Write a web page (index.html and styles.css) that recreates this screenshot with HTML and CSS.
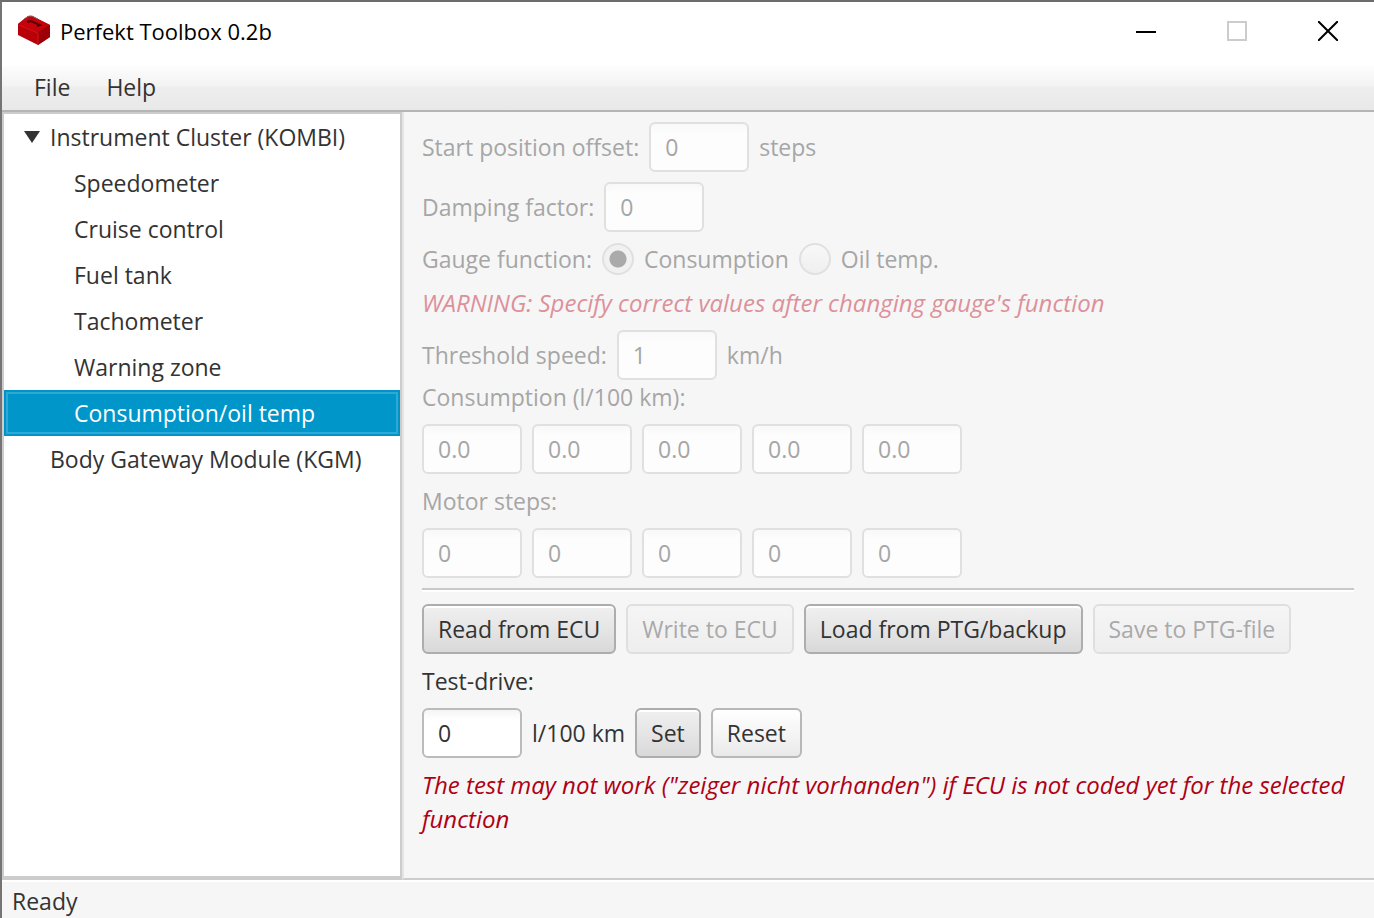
FILE: index.html
```html
<!DOCTYPE html>
<html lang="en">
<head>
<meta charset="utf-8">
<title>Perfekt Toolbox 0.2b</title>
<link rel="stylesheet" href="styles.css">
</head>
<body>
<div class="window">
  <header class="titlebar">
    <svg class="logo" viewBox="0 0 32 31" aria-hidden="true">
      <path fill="#b80008" d="M0 9 10 1h4l18 9v12l-12 8L0 20z"/>
      <path fill="#c4040c" d="M0 9 10 1h4l18 9-12 7z"/>
      <path fill="#9c0006" d="m20 17 12-7v12l-12 8z"/>
      <path fill="none" stroke="#e01018" d="m1 10 19 8v11"/>
      <path fill="none" stroke="#560004" stroke-width="2" d="m9 7 4-1 9 4-3 1"/>
      <path fill="none" stroke="#8e6b6b" d="m6 4 5-3h3l6 3"/>
    </svg>
    <h1 class="title">Perfekt Toolbox 0.2b</h1>
    <div class="controls">
      <button class="control" aria-label="Minimize"><svg viewBox="0 0 20 20"><path d="M0 11h20"/></svg></button>
      <button class="control" aria-label="Maximize" disabled><svg viewBox="0 0 20 20"><path d="M1 1h18v18H1z"/></svg></button>
      <button class="control" aria-label="Close"><svg viewBox="0 0 20 20"><path d="m0 0 20 20M20 0 0 20"/></svg></button>
    </div>
  </header>
  <nav class="menubar">
    <button class="menu">File</button>
    <button class="menu">Help</button>
  </nav>
  <div class="body">
    <ul class="tree" role="tree">
      <li class="node root" role="treeitem" aria-expanded="true"><svg class="arrow" viewBox="0 0 16 12" aria-hidden="true"><path d="M0 0h16L8 12z"/></svg>Instrument Cluster (KOMBI)</li>
      <li class="node leaf" role="treeitem">Speedometer</li>
      <li class="node leaf" role="treeitem">Cruise control</li>
      <li class="node leaf" role="treeitem">Fuel tank</li>
      <li class="node leaf" role="treeitem">Tachometer</li>
      <li class="node leaf" role="treeitem">Warning zone</li>
      <li class="node leaf selected" role="treeitem" aria-selected="true">Consumption/oil temp</li>
      <li class="node top" role="treeitem">Body Gateway Module (KGM)</li>
    </ul>
    <main class="panel">
      <div class="row dim"><label for="offset">Start position offset:</label><input class="field" id="offset" value="0" disabled><span>steps</span></div>
      <div class="row dim"><label for="damping">Damping factor:</label><input class="field" id="damping" value="0" disabled></div>
      <div class="row dim" role="radiogroup" aria-label="Gauge function">
        <span>Gauge function:</span>
        <label class="option"><input class="radio" type="radio" name="gauge" checked disabled>Consumption</label>
        <label class="option"><input class="radio" type="radio" name="gauge" disabled>Oil temp.</label>
      </div>
      <p class="note dim">WARNING: Specify correct values after changing gauge's function</p>
      <div class="group">
        <div class="row dim"><label for="threshold">Threshold speed:</label><input class="field" id="threshold" value="1" disabled><span>km/h</span></div>
        <p class="text dim" id="consumption">Consumption (l/100 km):</p>
      </div>
      <div class="row" role="group" aria-labelledby="consumption">
        <input class="field" value="0.0" aria-label="Consumption 1" disabled>
        <input class="field" value="0.0" aria-label="Consumption 2" disabled>
        <input class="field" value="0.0" aria-label="Consumption 3" disabled>
        <input class="field" value="0.0" aria-label="Consumption 4" disabled>
        <input class="field" value="0.0" aria-label="Consumption 5" disabled>
      </div>
      <p class="text dim" id="motor">Motor steps:</p>
      <div class="row" role="group" aria-labelledby="motor">
        <input class="field" value="0" aria-label="Motor steps 1" disabled>
        <input class="field" value="0" aria-label="Motor steps 2" disabled>
        <input class="field" value="0" aria-label="Motor steps 3" disabled>
        <input class="field" value="0" aria-label="Motor steps 4" disabled>
        <input class="field" value="0" aria-label="Motor steps 5" disabled>
      </div>
      <hr class="separator">
      <div class="row">
        <button class="button strong">Read from ECU</button>
        <button class="button" disabled>Write to ECU</button>
        <button class="button strong">Load from PTG/backup</button>
        <button class="button" disabled>Save to PTG-file</button>
      </div>
      <label class="text" for="test">Test-drive:</label>
      <div class="row">
        <input class="field" id="test" value="0"><span>l/100 km</span>
        <button class="button strong">Set</button>
        <button class="button">Reset</button>
      </div>
      <p class="note">The test may not work ("zeiger nicht vorhanden") if ECU is not coded yet for the selected function</p>
    </main>
  </div>
  <footer class="status">Ready</footer>
</div>
</body>
</html>
```
FILE: styles.css
```css
* { box-sizing: border-box; }
body {
  margin: 0;
  color: #333;
  font: 23px/34px "Open Sans", "Noto Sans", sans-serif;
}
p, h1, ul { margin: 0; padding: 0; }
button, input { font: inherit; color: inherit; }
.window {
  display: flex;
  flex-direction: column;
  min-height: 100vh;
  border-top: 2px solid #6d6b6d;
  border-left: 2px solid #757375;
  background: #f6f6f6;
}
.titlebar {
  display: flex;
  align-items: center;
  height: 64px;
  padding: 0 1px 7px 16px;
  background: #fff;
}
.logo { width: 32px; height: 31px; }
.title {
  margin-left: 10px;
  color: #000;
  font-size: 22px;
  font-weight: 400;
}
.controls { display: flex; margin-left: auto; }
.control {
  display: grid;
  place-items: center;
  width: 91px;
  height: 56px;
  padding: 0;
  border: 0;
  background: none;
}
.control svg {
  width: 20px;
  height: 20px;
  fill: none;
  stroke: #000;
  stroke-width: 2;
}
.control:disabled svg { stroke: #ccc; }
.menubar {
  display: flex;
  height: 46px;
  padding: 0 16px 2px;
  border-bottom: 2px solid #b5b5b5;
  background: linear-gradient(#fdfdfd, #f3f3f3 45%, #eee 48%, #e9e8e9);
}
.menu {
  padding: 0 20px 0 16px;
  border: 0;
  background: none;
}
.body { display: flex; flex: 1; }
.tree {
  flex: 0 0 400px;
  border: 2px solid #ccc;
  border-bottom-width: 4px;
  background: #fff;
  list-style: none;
}
.node {
  display: flex;
  align-items: center;
  height: 46px;
}
.root { padding-left: 20px; }
.top { padding-left: 46px; }
.leaf { padding-left: 70px; }
.arrow {
  width: 16px;
  height: 12px;
  margin-right: 10px;
  fill: #333;
}
.selected {
  border: 2px solid #0093ca;
  outline: 2px solid #30a8d4;
  outline-offset: -4px;
  padding-left: 68px;
  background: #0096c9;
  color: #fff;
}
.panel {
  display: flex;
  flex: 1;
  flex-direction: column;
  gap: 10px;
  min-width: 0;
  padding: 10px 20px 10px 18px;
  border-bottom: 2px solid #ccc;
  border-left: 2px solid #e4e4e4;
}
.row {
  display: flex;
  align-items: center;
  gap: 10px;
  white-space: nowrap;
}
.dim { color: #a6a6a6; }
.field {
  width: 100px;
  height: 50px;
  padding: 0 14px;
  border: 2px solid #bbb;
  border-radius: 6px;
  background: linear-gradient(#f5f5f5, #fff 10px);
}
.field:disabled {
  border-color: #e0e0e0;
  background: linear-gradient(#f8f8f8, #fdfdfd 10px);
  color: #a6a6a6;
}
.option { display: flex; align-items: center; gap: 10px; }
.radio {
  width: 32px;
  height: 32px;
  margin: 0;
  border: 2px solid #e0e0e0;
  border-radius: 50%;
  appearance: none;
  background: linear-gradient(#f8f8f8, #efefef);
}
.radio:checked {
  background: radial-gradient(circle, #aaa 8px, #f1f1f1 9px);
}
.note { color: #b00014; font-size: 24px; font-style: italic; }
.note.dim { color: #dc919a; }
.separator {
  width: 100%;
  height: 6px;
  margin: 0;
  border: 0;
  border-top: 2px solid #c8cac8;
  background: linear-gradient(#fff 2px, transparent 2px);
}
.button {
  height: 50px;
  padding: 0 14px;
  border: 2px solid #b8b8b8;
  border-radius: 6px;
  background: linear-gradient(#fff, #f5f5f5 50%, #e9e9e9);
  box-shadow: inset 0 2px #fff;
}
.strong {
  border-color: #adadad;
  background: linear-gradient(#f0f0f0, #e5e5e5 50%, #d9d9d9);
}
.button:disabled {
  border-color: #dfdfdf;
  background: linear-gradient(#f6f5f6, #efeeef);
  box-shadow: none;
  color: #a9a9a9;
}
.status {
  height: 38px;
  padding: 2px 10px 0;
  border-top: 2px solid #fff;
}
```
